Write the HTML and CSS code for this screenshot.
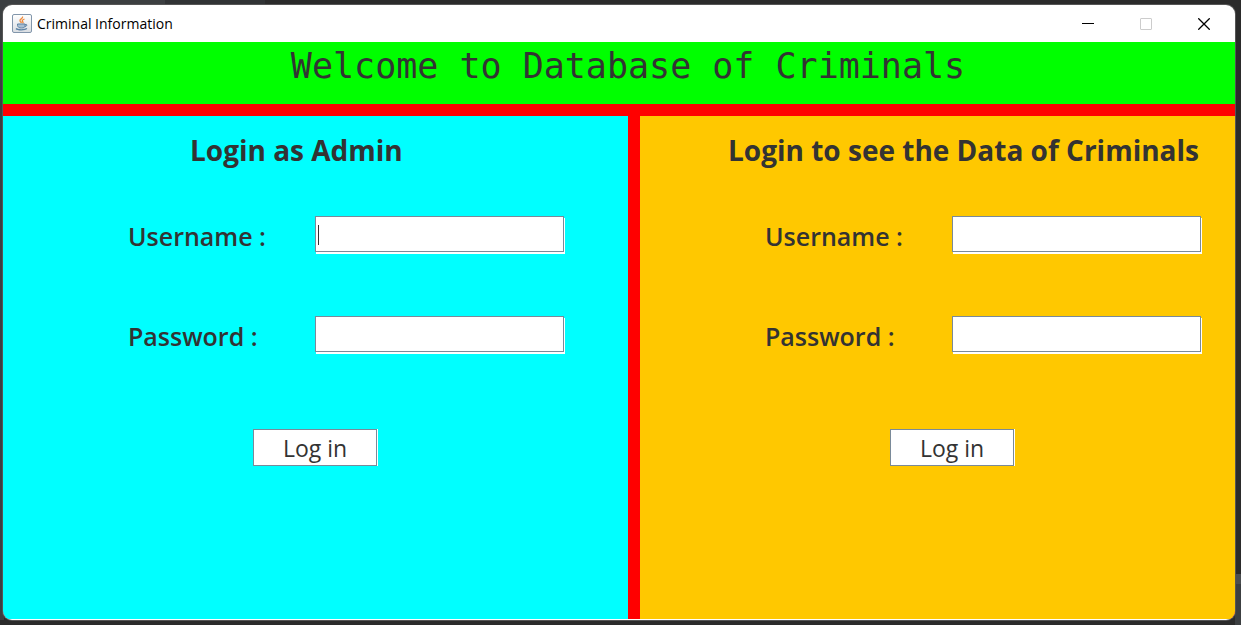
FILE: index.html
```
<!DOCTYPE html>
<html lang="en">
<head>
<meta charset="utf-8">
<title>Criminal Information</title>
<meta name="viewport" content="width=device-width, initial-scale=1">
<link rel="stylesheet" href="styles.css">
</head>
<body>
<div class="window">
  <header class="titlebar">
    <svg class="app-icon" viewBox="0 0 20 20" aria-hidden="true">
      <defs><linearGradient id="tile" x1="0" y1="0" x2="0" y2="1"><stop offset="0" stop-color="#ffffff"/><stop offset="1" stop-color="#d9dde1"/></linearGradient></defs>
      <rect x=".5" y=".5" width="19" height="18" rx="1.5" fill="url(#tile)" stroke="#8296ab"/>
      <path d="M10.5 2.5c1 2-3.500 2.700-2.500 4.500.4.800 1.200 1.300 1.500 2M12.500 5c-2 .8-3 1.700-1.800 2.800.7.700.3 1.200-.2 1.500" fill="none" stroke="#ee8a3c" stroke-width="1.300"/>
      <path d="M5.500 10h7.500v1.500c0 1.800-1 2.500-3.500 2.500s-3.500-.7-4-2.500zM13 10.500c2.500-.8 2.500 1.700-.2 2.300" fill="#a9bfd2" stroke="#5e83a5" stroke-width="1"/>
      <path d="M4 14.500c1.500 1.700 9 1.700 11 0" fill="none" stroke="#5e83a5" stroke-width="1.200"/>
    </svg>
    <span class="app-name">Criminal Information</span>
    <div class="controls">
      <button class="control" type="button" aria-label="Minimize"><svg viewBox="0 0 12 12"><path d="M0 5.500h12"/></svg></button>
      <button class="control" type="button" aria-label="Maximize" disabled><svg viewBox="0 0 12 12"><rect x=".5" y=".5" width="11" height="11" rx=".5"/></svg></button>
      <button class="control" type="button" aria-label="Close"><svg viewBox="0 0 12 12"><path stroke-width="1.300" d="M.3.3l11.400 11.400M11.700.3L.3 11.700"/></svg></button>
    </div>
  </header>
  <h1 class="banner">Welcome to Database of Criminals</h1>
  <main class="panels">
    <form class="panel admin">
      <h2 class="heading">Login as Admin</h2>
      <div class="row">
        <label for="admin-user">Username :</label>
        <input class="field active" id="admin-user" type="text">
      </div>
      <div class="row">
        <label for="admin-pass">Password :</label>
        <input class="field" id="admin-pass" type="password">
      </div>
      <button class="login" type="button">Log in</button>
    </form>
    <form class="panel viewer">
      <h2 class="heading">Login to see the Data of Criminals</h2>
      <div class="row">
        <label for="view-user">Username :</label>
        <input class="field" id="view-user" type="text">
      </div>
      <div class="row">
        <label for="view-pass">Password :</label>
        <input class="field" id="view-pass" type="password">
      </div>
      <button class="login" type="button">Log in</button>
    </form>
  </main>
</div>
</body>
</html>
```
FILE: styles.css
```
* { box-sizing: border-box; }

body {
  margin: 0;
  min-height: 100vh;
  padding: 5px 6px 5px 3px;
  display: flex;
  background:
    linear-gradient(#4b4e50, #4b4e50) right 0 bottom 41px / 8px 10px no-repeat,
    linear-gradient(#3c3f41, #3c3f41) right 0 bottom 0 / 6px 41px no-repeat,
    linear-gradient(#3c3f41, #3c3f41) left 0 top 0 / 165px 100px no-repeat,
    linear-gradient(#3c3f41, #3c3f41) left 0 top 0 / 4px 620px no-repeat,
    linear-gradient(#313335, #313335) left 165px top 0 / 100px 10px no-repeat,
    #2b2b2b;
  color: #333;
  font-family: "Comic Sans MS", "Open Sans", sans-serif;
}

.window {
  flex: 1;
  min-width: 0;
  display: flex;
  flex-direction: column;
  border-radius: 9px;
  overflow: hidden;
  background: #fff;
  box-shadow: 0 0 0 1px #555;
  padding-bottom: 1px;
}

.titlebar {
  display: flex;
  align-items: center;
  height: 37px;
  padding: 0 2px 0 9px;
  gap: 5px;
  color: #000;
}

.app-icon { width: 20px; height: 20px; }

.app-name {
  font-family: "Segoe UI", "Open Sans", sans-serif;
  font-size: 14px;
}

.controls { display: flex; margin-left: auto; }

.control {
  width: 58px;
  height: 37px;
  padding: 0;
  border: 0;
  background: none;
  color: #000;
  display: grid;
  place-items: center;
}

.control:disabled { color: #ccc; }

.control svg {
  width: 12px;
  height: 12px;
  fill: none;
  stroke: currentColor;
}

.banner {
  margin: 0;
  padding-left: 18px;
  border-bottom: 12px solid #f00;
  background: #0f0;
  height: 74px;
  line-height: 48px;
  font-family: Consolas, "DejaVu Sans Mono", monospace;
  font-size: 35px;
  font-weight: 400;
  text-align: center;
}

.panels {
  flex: 1;
  display: grid;
  grid-template-columns: 625fr 595fr;
  gap: 12px;
  background: #f00;
}

.panel {
  display: flex;
  flex-direction: column;
  align-items: flex-start;
  padding: 16px 0 16px 125px;
}

.admin { background: #0ff; }
.viewer { background: #ffc800; }

.heading {
  margin: 0 0 48px;
  line-height: 36px;
  font-size: 28px;
  font-weight: 700;
  white-space: nowrap;
}

.admin .heading { padding-left: 62px; }
.viewer .heading { margin-left: -37px; }

.row {
  display: grid;
  grid-template-columns: 187px 249px;
  align-items: center;
  margin-bottom: 64px;
}

.row label {
  padding-top: 4px;
  font-size: 25px;
  font-weight: 600;
  line-height: 32px;
}

.field {
  width: 100%;
  height: 36px;
  border: 1px solid #7a8a99;
  border-radius: 0;
  padding: 0 3px;
  background: #fff;
  box-shadow: 1px 2px #fff;
  font: inherit;
  font-size: 20px;
  outline: 0;
}

.active {
  background: linear-gradient(#333, #333) 2px 8px / 1px 20px no-repeat #fff;
}

.login {
  width: 124px;
  height: 37px;
  margin: 13px 0 0 125px;
  padding: 0;
  border: 1px solid #7a8a99;
  background: #fff;
  box-shadow: 1px 0 #fff;
  color: #333;
  font-family: inherit;
  font-size: 23px;
}
```
